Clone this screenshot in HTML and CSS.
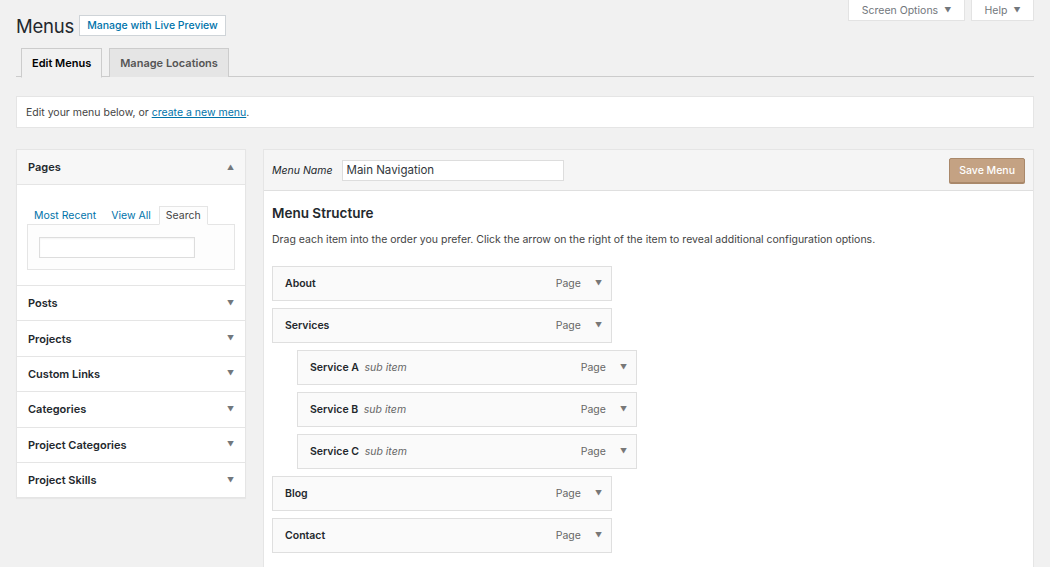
FILE: index.html
```html
<!DOCTYPE html>
<html>
<head>
<meta charset="utf-8">
<link rel="stylesheet" href="styles.css">
</head>
<body>
<div class="wrap">
  <div class="top">
    <div class="title-row">
      <h1 class="title">Menus</h1>
      <a class="btn-outline">Manage with Live Preview</a>
    </div>
    <div class="meta-links">
      <span class="meta-btn so">Screen Options <span class="caret">▼</span></span>
      <span class="meta-btn help">Help <span class="caret">▼</span></span>
    </div>
  </div>
  <div class="tabs">
    <span class="tab active">Edit Menus</span>
    <span class="tab">Manage Locations</span>
  </div>
  <div class="notice">Edit your menu below, or <a class="link">create a new menu</a>.</div>
  <div class="columns">
    <div class="side">
      <div class="side-sec open">
        <div class="side-head">Pages <span class="tri">▲</span></div>
        <div class="side-body">
          <div class="subtabs">
            <span class="subtab">Most Recent</span>
            <span class="subtab">View All</span>
            <span class="subtab cur">Search</span>
          </div>
          <div class="subpanel"><div class="search-input"></div></div>
        </div>
      </div>
      <div class="side-sec"><div class="side-head">Posts <span class="tri">▼</span></div></div>
      <div class="side-sec"><div class="side-head">Projects <span class="tri">▼</span></div></div>
      <div class="side-sec"><div class="side-head">Custom Links <span class="tri">▼</span></div></div>
      <div class="side-sec"><div class="side-head">Categories <span class="tri">▼</span></div></div>
      <div class="side-sec"><div class="side-head">Project Categories <span class="tri">▼</span></div></div>
      <div class="side-sec"><div class="side-head">Project Skills <span class="tri">▼</span></div></div>
    </div>
    <div class="main">
      <div class="main-head">
        <label class="name-label">Menu Name</label>
        <div class="name-input">Main Navigation</div>
        <span class="save-btn">Save Menu</span>
      </div>
      <div class="main-body">
        <h3 class="struct-title">Menu Structure</h3>
        <p class="desc">Drag each item into the order you prefer. Click the arrow on the right of the item to reveal additional configuration options.</p>
        <ul class="items">
          <li class="item"><span class="item-title">About</span><span class="item-type">Page</span><span class="tri">▼</span></li>
          <li class="item"><span class="item-title">Services</span><span class="item-type">Page</span><span class="tri">▼</span></li>
          <li class="item sub"><span class="item-title">Service A <em class="subtag">sub item</em></span><span class="item-type">Page</span><span class="tri">▼</span></li>
          <li class="item sub"><span class="item-title">Service B <em class="subtag">sub item</em></span><span class="item-type">Page</span><span class="tri">▼</span></li>
          <li class="item sub"><span class="item-title">Service C <em class="subtag">sub item</em></span><span class="item-type">Page</span><span class="tri">▼</span></li>
          <li class="item"><span class="item-title">Blog</span><span class="item-type">Page</span><span class="tri">▼</span></li>
          <li class="item"><span class="item-title">Contact</span><span class="item-type">Page</span><span class="tri">▼</span></li>
        </ul>
      </div>
    </div>
  </div>
</div>
</body>
</html>
```
FILE: styles.css
```css
* { box-sizing: border-box; }
html, body { margin: 0; padding: 0; }
body {
  background: #f1f1f1;
  font-family: Inter, "Noto Sans", "Liberation Sans", sans-serif;
  font-size: 11px;
  color: #23282d;
  overflow: hidden;
}
.wrap { padding: 0 16px; }
.top { display: flex; justify-content: space-between; align-items: flex-start; }
.title-row { display: flex; align-items: center; gap: 5px; padding-top: 15px; }
.title { margin: 0; font-size: 18.5px; font-weight: 400; color: #23282d; line-height: 20px; letter-spacing: -0.2px; }
.btn-outline {
  display: inline-block; height: 21px; line-height: 19px; padding: 0 7px;
  border: 1px solid #cfd4d8; background: #fff; color: #0073aa; font-size: 10.5px; font-weight: 500;
}
.meta-links { display: flex; gap: 6px; }
.meta-btn {
  display: flex; align-items: center; justify-content: center; white-space: nowrap; height: 21px; background: #fff;
  border: 1px solid #e3e3e3; border-top: 0; color: #72777c; font-size: 10.5px;
}
.meta-btn.so { width: 117px; }
.meta-btn.help { width: 63px; }
.caret { font-size: 7px; margin-left: 6px; }
.tabs { display: flex; gap: 7px; margin-top: 12px; padding-left: 5px; border-bottom: 1px solid #ccc; height: 29px; }
.tab {
  display: inline-block; height: 29px; line-height: 28px; padding: 0 10px; font-size: 11px; font-weight: 600;
  border: 1px solid #ccc; border-bottom: 0; background: #e5e5e5; color: #555;
}
.tab.active { background: #f1f1f1; color: #000; height: 30px; border-bottom: 1px solid #f1f1f1; }
.notice {
  margin-top: 19px; height: 32px; line-height: 31px; background: #fff; border: 1px solid #e5e5e5;
  padding: 0 9px; font-size: 10.5px; color: #444;
}
.link { color: #0073aa; text-decoration: underline; }
.columns { display: flex; gap: 17px; margin-top: 21px; align-items: flex-start; }
.side { width: 230px; flex: none; background: #fff; border: 1px solid #e5e5e5; box-shadow: 0 1px 1px rgba(0,0,0,.04); }
.side-sec { border-top: 1px solid #e5e5e5; }
.side-sec:first-child { border-top: 0; }
.side-head {
  height: 34.4px; padding: 0 11px; display: flex; align-items: center; justify-content: space-between;
  font-size: 11px; font-weight: 600; color: #23282d;
}
.open .side-head { background: #f7f7f7; border-bottom: 1px solid #e5e5e5; height: 35px; }
.tri { font-size: 7px; color: #72777c; font-weight: 400; }
.side-body { padding: 21px 10px 15px 10px; }
.subtabs { display: flex; padding-left: 0; height: 18px; align-items: flex-end; }
.subtab { display: inline-block; color: #0073aa; font-size: 10.5px; padding: 0 8px 0 7px; line-height: 17px; }
.subtab.cur { color: #444; border: 1px solid #e5e5e5; border-bottom: 1px solid #fdfdfd; background: #fdfdfd; margin-bottom: -1px; padding: 0 6px; height: 19px; line-height: 18px; }
.subpanel { border: 1px solid #e5e5e5; height: 46px; padding: 12px 11px; background: #fdfdfd; }
.search-input { width: 156px; height: 21px; border: 1px solid #ddd; background: #fff; box-shadow: inset 0 1px 2px rgba(0,0,0,.05); }
.main { flex: 1; background: #fff; border: 1px solid #e5e5e5; height: 430px; }
.main-head {
  height: 41px; background: #f5f5f5; border-bottom: 1px solid #dfdfdf; display: flex; align-items: center; padding: 0 8px 0 8px;
}
.name-label { font-style: italic; font-size: 10.5px; color: #23282d; margin-right: 9px; }
.name-input {
  width: 222px; height: 21px; border: 1px solid #ddd; background: #fff; line-height: 19px; padding: 0 4px; font-size: 11.5px; color: #32373c;
}
.save-btn {
  margin-left: auto; background: #c4a283; border: 1px solid #a9886a; color: #fff; height: 25px; line-height: 23px;
  padding: 0 9px; font-size: 10.5px; font-weight: 500; border-radius: 2px; box-shadow: 0 1px 0 #a9886a;
}
.main-body { padding: 11px 8px; }
.struct-title { margin: 2px 0 0 0; font-size: 13.5px; font-weight: 600; line-height: 18px; color: #23282d; }
.desc { margin: 11px 0 0 0; font-size: 10.5px; color: #444; line-height: 14px; }
.items { list-style: none; margin: 19px 0 0 0; padding: 0; display: flex; flex-direction: column; gap: 7px; }
.item {
  width: 340px; height: 35px; border: 1px solid #dfdfdf; background: #fafafa; display: flex; align-items: center;
  padding: 0 9px 0 12px; position: relative;
}
.item.sub { margin-left: 25px; }
.item-title { font-weight: 600; font-size: 10.5px; color: #23282d; flex: 1; }
.subtag { font-style: italic; font-weight: 400; color: #666; margin-left: 3px; }
.item-type { color: #666; font-size: 10.5px; margin-right: 14px; }
.item .tri { color: #777; }
```
